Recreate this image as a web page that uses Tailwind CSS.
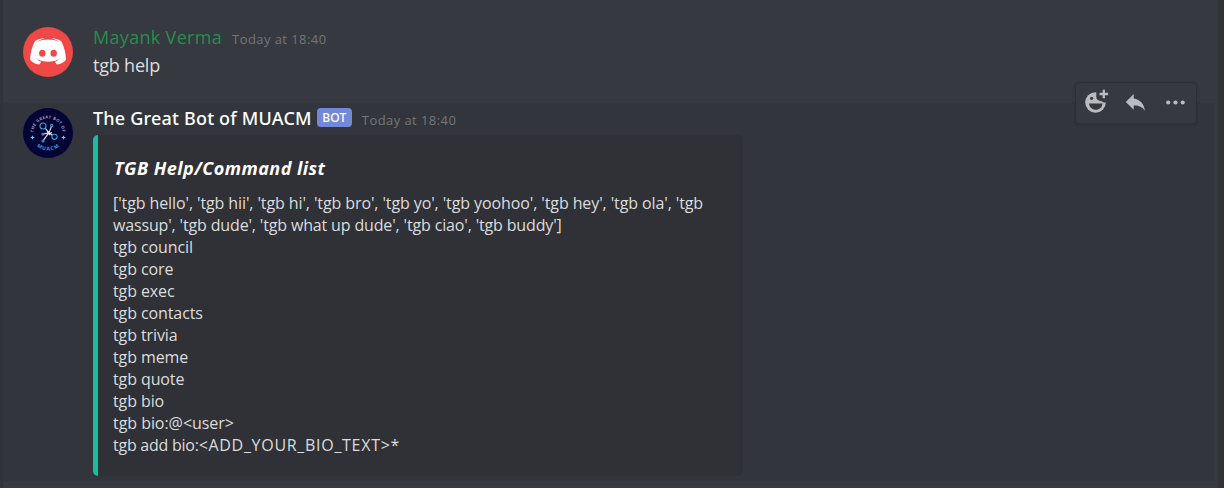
<!DOCTYPE html>
<html lang="en">
<head>
<meta charset="utf-8">
<title>Chat</title>
<script src="https://cdn.jsdelivr.net/npm/@tailwindcss/browser@4"></script>
</head>
<body class="h-[488px] w-[1224px] overflow-hidden bg-[#36393f] font-['Open_Sans','Noto_Sans',sans-serif] text-[#dcddde]">
<div class="flex h-[488px]">
  <div class="w-[3px] shrink-0 bg-[#303237]"></div>
  <main class="w-[1215px] shrink-0">
    <article class="flex h-[103px] gap-5 pt-[27px] pl-5">
      <svg class="size-[50px] shrink-0" viewBox="0 0 50 50">
        <circle cx="25" cy="25" r="25" fill="#f04747"/>
        <path fill="#fff" d="M20.5 11.200c-3.800.3-6.800 1.500-8.700 3C9 19.500 7.300 26 7.100 32.700c1.900 2.700 5 4.600 9.200 4.700l2-2.600c-2.400-.7-3.600-1.600-4.500-2.700 6.700 3.600 16.300 3.600 22.600 0-1 1.200-2.300 2-4.600 2.700l2 2.600c4.200-.1 7.200-2 9.200-4.700-.2-6.800-1.900-13.300-4.700-18.500-1.900-1.500-4.900-2.700-8.700-3l-.5.600c3 .7 5.100 1.700 6.600 3-6-3-15.500-3-21.300 0 1.500-1.300 3.700-2.300 6.600-3z"/>
        <ellipse cx="19.300" cy="26.300" rx="3.200" ry="3.500" fill="#f04747"/>
        <ellipse cx="30.700" cy="26.300" rx="3.200" ry="3.500" fill="#f04747"/>
      </svg>
      <div class="-mt-px">
        <div class="flex items-baseline gap-[10px] leading-[22px]">
          <span class="text-[18px] tracking-[0.32px] text-[#248f4d]">Mayank Verma</span>
          <span class="text-[13px] tracking-[0.43px] text-[#72767d]">Today at 18:40</span>
        </div>
        <p class="mt-1 text-[18px] leading-[22px] tracking-[-0.2px]">tgb help</p>
      </div>
    </article>

    <article class="relative flex h-[378px] w-[1211px] gap-5 bg-[#32353b] pt-[5px] pl-5">
      <svg class="size-[50px] shrink-0" viewBox="0 0 50 50">
        <defs>
          <path id="arcTop" d="M10.500 25A14.500 14.500 0 0 1 39.500 25"/>
          <path id="arcBottom" d="M7.500 25A17.500 17.500 0 0 0 42.500 25"/>
        </defs>
        <circle cx="25" cy="25" r="25" fill="#040335"/>
        <text class="font-['Open_Sans',sans-serif] font-semibold" font-size="4" letter-spacing=".45" fill="#c4c4d6" text-anchor="middle"><textPath href="#arcTop" startOffset="50%">THE GREAT BOT OF</textPath></text>
        <text class="font-['Open_Sans',sans-serif] font-bold" font-size="5" letter-spacing="1.100" fill="#37a3df" text-anchor="middle"><textPath href="#arcBottom" startOffset="51%">MUACM</textPath></text>
        <g fill="none" stroke="#e4e4f4" stroke-width="1.100">
          <path d="m22.300 20.400 3.700 4.300 2.400-6M20.800 26l5.200-1.300 3.500 2.600M26 24.700l-5.500 7.500M24 22.800l3 4.500M24 26.500l5-2"/>
          <g stroke="#4599c9"><circle cx="20" cy="18" r="3"/><circle cx="31.500" cy="28.800" r="2.600"/><circle cx="28.700" cy="17.500" r="1.100"/><circle cx="19.800" cy="26.300" r=".9"/><circle cx="20" cy="33" r="1"/></g>
        </g>
        <path fill="#70c9ef" d="m9.500 27.200.7 1.600 1.600.7-1.600.7-.7 1.600-.7-1.600-1.600-.7 1.600-.7zm31 0 .7 1.600 1.600.7-1.600.7-.7 1.600-.7-1.600-1.600-.7 1.600-.7z"/>
      </svg>
      <div>
        <div class="flex h-[27px] items-start leading-[22px]">
          <span class="-mt-px font-['Noto_Sans',sans-serif] text-[18px] font-medium tracking-[0.2px] text-white">The Great Bot of MUACM</span>
          <span class="ml-[5px] flex h-[19px] w-[35px] items-center justify-center rounded-[4px] bg-[#7289da] font-['Noto_Sans',sans-serif] text-[12px] font-medium tracking-[0.2px] text-white">BOT</span>
          <span class="mt-px ml-[10px] text-[13px] tracking-[0.43px] text-[#72767d]">Today at 18:40</span>
        </div>
        <section class="h-[341px] w-[650px] rounded-[5px] border-l-[5px] border-[#1abc9c] bg-[#2f3136] pt-[22px] pl-[15px]">
          <h2 class="ml-px text-[18px] leading-[22px] font-bold tracking-[0.46px] text-white italic">TGB Help/Command list</h2>
          <div class="mt-[13px] text-[16px] leading-[22px] tracking-[-0.1px] whitespace-nowrap">
            <p>['tgb hello', 'tgb hii', 'tgb hi', 'tgb bro', 'tgb yo', 'tgb yoohoo', 'tgb hey', 'tgb ola', 'tgb</p>
            <p class="tracking-[-0.15px]">wassup', 'tgb dude', 'tgb what up dude', 'tgb ciao', 'tgb buddy']</p>
            <p>tgb council</p>
            <p>tgb core</p>
            <p>tgb exec</p>
            <p>tgb contacts</p>
            <p>tgb trivia</p>
            <p>tgb meme</p>
            <p>tgb quote</p>
            <p>tgb bio</p>
            <p class="tracking-[-0.05px]">tgb bio:@&lt;user&gt;</p>
            <p><span class="tracking-[-0.25px]">tgb add bio:</span><span class="tracking-[0.7px]">&lt;ADD_YOUR_BIO_TEXT&gt;*</span></p>
          </div>
        </section>
      </div>

      <div class="absolute top-[-21px] left-[1072px] flex h-[42px] w-[122px] items-center rounded-[4px] border border-[#2d2f34] bg-[#36393f] text-[#b9bbbe] shadow-sm">
        <svg class="h-10 w-10" viewBox="0 0 40 40">
          <circle cx="19.500" cy="19.500" r="10.300" fill="currentColor"/>
          <path fill="#36393f" d="M20.300 8h12v11.500h-4.600c-1-.4-2-1.500-3-1.500-2.700 0-4.400-1.900-4.400-4.200z"/>
          <circle cx="15.600" cy="15.300" r="1.600" fill="#36393f"/>
          <path fill="#36393f" d="M13 20.500h13.500c-.3 3.800-3 6.300-6.700 6.300s-6.400-2.500-6.800-6.300z"/>
          <path stroke="currentColor" stroke-width="2.300" d="M27.800 6.800v8.500M23.500 11h8.600"/>
        </svg>
        <svg class="h-10 w-10" viewBox="0 0 40 40"><path fill="currentColor" d="M17.700 15.500V11L9.800 19l7.900 7.800V22.500c4.700-.2 8.500 1 11.200 5.300-.8-6.500-4.400-11.200-11.200-12.300z"/></svg>
        <svg class="h-10 w-10" viewBox="0 0 40 40" fill="currentColor"><circle cx="12.200" cy="19.500" r="2.100"/><circle cx="19.500" cy="19.500" r="2.100"/><circle cx="26.700" cy="19.500" r="2.100"/></svg>
      </div>
    </article>
  </main>
  <div class="flex-1 bg-[#2f3237]"></div>
</div>
</body>
</html>
